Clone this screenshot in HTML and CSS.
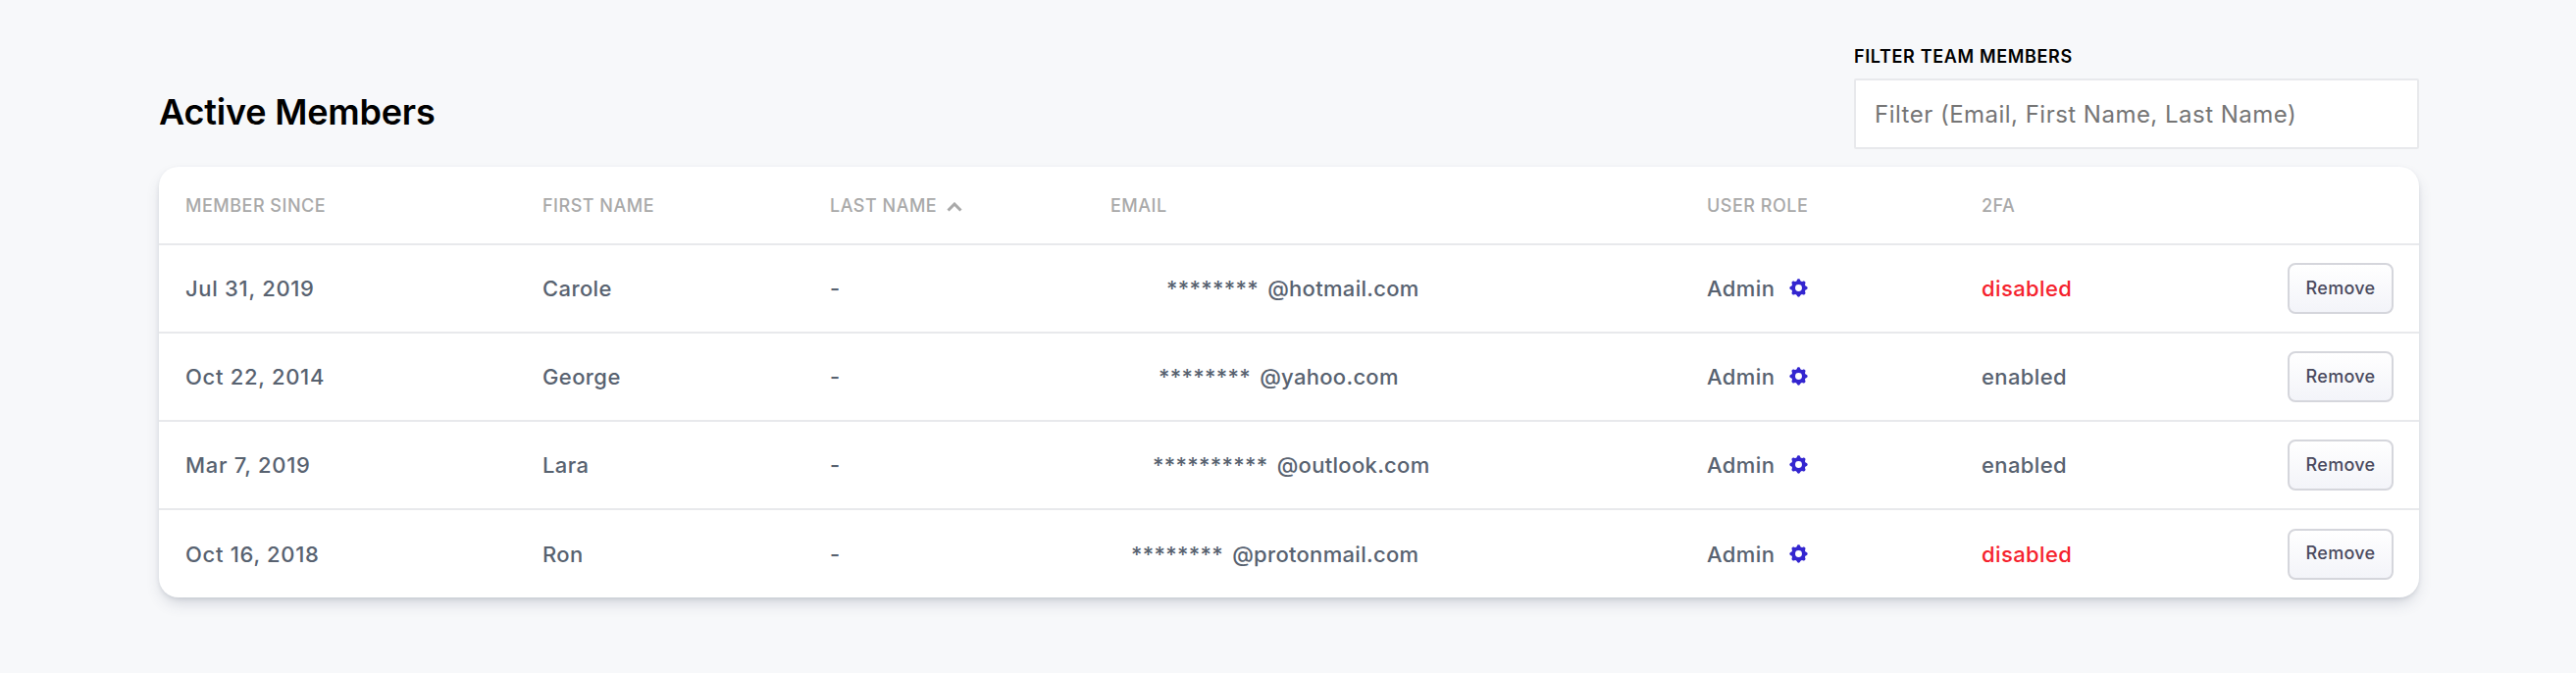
FILE: index.html
```html
<!DOCTYPE html>
<html lang="en">
<head>
    <meta charset="UTF-8">
    <meta name="viewport" content="width=device-width, initial-scale=1.0">
    <title>Active Members</title>
    <link rel="stylesheet" href="styles.css">
</head>
<body>
    <main class="page">
        <div class="top-bar">
            <h2>Active Members</h2>
            <div class="filter">
                <label for="filter">FILTER TEAM MEMBERS</label>
                <input id="filter" type="text" placeholder="Filter (Email, First Name, Last Name)">
            </div>
        </div>
        <div class="card">
            <table>
                <colgroup>
                    <col class="col-since">
                    <col class="col-first">
                    <col class="col-last">
                    <col class="col-email">
                    <col class="col-role">
                    <col class="col-2fa">
                    <col>
                </colgroup>
                <thead>
                    <tr>
                        <th>MEMBER SINCE</th>
                        <th>FIRST NAME</th>
                        <th>LAST NAME
                            <svg class="chevron" viewBox="0 0 16 10" width="16" height="10"><path d="M1.5 8.5 8 2l6.500 6.500"/></svg>
                        </th>
                        <th>EMAIL</th>
                        <th>USER ROLE</th>
                        <th>2FA</th>
                        <th></th>
                    </tr>
                </thead>
                <tbody>
                    <tr>
                        <td class="date">Jul 31, 2019</td>
                        <td>Carole</td>
                        <td>-</td>
                        <td><span class="mail mail-hotmail">******** @hotmail.com</span></td>
                        <td>Admin <svg class="gear" viewBox="0 0 20 20" width="23" height="23"><path fill-rule="evenodd" d="M11.49 3.17c-.38-1.56-2.6-1.56-2.98 0a1.532 1.532 0 01-2.286.948c-1.372-.836-2.942.734-2.106 2.106.54.886.061 2.042-.947 2.287-1.561.379-1.561 2.6 0 2.978a1.532 1.532 0 01.947 2.287c-.836 1.372.734 2.942 2.106 2.106a1.532 1.532 0 012.287.947c.379 1.561 2.6 1.561 2.978 0a1.533 1.533 0 012.287-.947c1.372.836 2.942-.734 2.106-2.106a1.533 1.533 0 01.947-2.287c1.561-.379 1.561-2.6 0-2.978a1.532 1.532 0 01-.947-2.287c.836-1.372-.734-2.942-2.106-2.106a1.532 1.532 0 01-2.287-.947zM10 13a3 3 0 100-6 3 3 0 000 6z"/></svg></td>
                        <td class="off">disabled</td>
                        <td class="action"><button>Remove</button></td>
                    </tr>
                    <tr>
                        <td class="date">Oct 22, 2014</td>
                        <td>George</td>
                        <td>-</td>
                        <td><span class="mail mail-yahoo">******** @yahoo.com</span></td>
                        <td>Admin <svg class="gear" viewBox="0 0 20 20" width="23" height="23"><path fill-rule="evenodd" d="M11.49 3.17c-.38-1.56-2.6-1.56-2.98 0a1.532 1.532 0 01-2.286.948c-1.372-.836-2.942.734-2.106 2.106.54.886.061 2.042-.947 2.287-1.561.379-1.561 2.6 0 2.978a1.532 1.532 0 01.947 2.287c-.836 1.372.734 2.942 2.106 2.106a1.532 1.532 0 012.287.947c.379 1.561 2.6 1.561 2.978 0a1.533 1.533 0 012.287-.947c1.372.836 2.942-.734 2.106-2.106a1.533 1.533 0 01.947-2.287c1.561-.379 1.561-2.6 0-2.978a1.532 1.532 0 01-.947-2.287c.836-1.372-.734-2.942-2.106-2.106a1.532 1.532 0 01-2.287-.947zM10 13a3 3 0 100-6 3 3 0 000 6z"/></svg></td>
                        <td>enabled</td>
                        <td class="action"><button>Remove</button></td>
                    </tr>
                    <tr>
                        <td class="date">Mar 7, 2019</td>
                        <td>Lara</td>
                        <td>-</td>
                        <td><span class="mail mail-outlook">********** @outlook.com</span></td>
                        <td>Admin <svg class="gear" viewBox="0 0 20 20" width="23" height="23"><path fill-rule="evenodd" d="M11.49 3.17c-.38-1.56-2.6-1.56-2.98 0a1.532 1.532 0 01-2.286.948c-1.372-.836-2.942.734-2.106 2.106.54.886.061 2.042-.947 2.287-1.561.379-1.561 2.6 0 2.978a1.532 1.532 0 01.947 2.287c-.836 1.372.734 2.942 2.106 2.106a1.532 1.532 0 012.287.947c.379 1.561 2.6 1.561 2.978 0a1.533 1.533 0 012.287-.947c1.372.836 2.942-.734 2.106-2.106a1.533 1.533 0 01.947-2.287c1.561-.379 1.561-2.6 0-2.978a1.532 1.532 0 01-.947-2.287c.836-1.372-.734-2.942-2.106-2.106a1.532 1.532 0 01-2.287-.947zM10 13a3 3 0 100-6 3 3 0 000 6z"/></svg></td>
                        <td>enabled</td>
                        <td class="action"><button>Remove</button></td>
                    </tr>
                    <tr>
                        <td class="date">Oct 16, 2018</td>
                        <td>Ron</td>
                        <td>-</td>
                        <td><span class="mail mail-proton">******** @protonmail.com</span></td>
                        <td>Admin <svg class="gear" viewBox="0 0 20 20" width="23" height="23"><path fill-rule="evenodd" d="M11.49 3.17c-.38-1.56-2.6-1.56-2.98 0a1.532 1.532 0 01-2.286.948c-1.372-.836-2.942.734-2.106 2.106.54.886.061 2.042-.947 2.287-1.561.379-1.561 2.6 0 2.978a1.532 1.532 0 01.947 2.287c-.836 1.372.734 2.942 2.106 2.106a1.532 1.532 0 012.287.947c.379 1.561 2.6 1.561 2.978 0a1.533 1.533 0 012.287-.947c1.372.836 2.942-.734 2.106-2.106a1.533 1.533 0 01.947-2.287c1.561-.379 1.561-2.6 0-2.978a1.532 1.532 0 01-.947-2.287c.836-1.372-.734-2.942-2.106-2.106a1.532 1.532 0 01-2.287-.947zM10 13a3 3 0 100-6 3 3 0 000 6z"/></svg></td>
                        <td class="off">disabled</td>
                        <td class="action"><button>Remove</button></td>
                    </tr>
                </tbody>
            </table>
        </div>
    </main>
</body>
</html>
```

FILE: styles.css
```css
* {
    box-sizing: border-box;
    padding: 0;
    margin: 0;
}
body {
    font-family: Inter, sans-serif;
    background: #f7f8fa;
}
.page {
    min-height: 100vh;
    padding: 45px 160px 0 162px;
}
.top-bar {
    display: flex;
    justify-content: space-between;
    align-items: flex-end;
    margin-bottom: 18px;
}
.top-bar h2 {
    font-size: 36px;
    line-height: 44px;
    font-weight: 600;
    letter-spacing: -0.2px;
    color: #000;
    padding-bottom: 16px;
}
.filter {
    width: 576px;
}
.filter label {
    display: block;
    font-size: 18px;
    line-height: 26px;
    font-weight: 600;
    letter-spacing: 0.65px;
    color: #000;
    margin-bottom: 9px;
}
.filter input {
    display: block;
    width: 100%;
    height: 72px;
    padding: 0 19px;
    font-size: 24px;
    letter-spacing: 0.48px;
    font-family: Inter, sans-serif;
    background: #fff;
    border: 2px solid #e8e9ec;
    border-radius: 2px;
    outline: none;
}
.filter input::placeholder {
    color: #757575;
    opacity: 1;
}
.card {
    background: #fff;
    border-radius: 20px;
    box-shadow: 0 8px 16px -3px rgba(60, 72, 95, 0.2), 0 2px 5px -1px rgba(60, 72, 95, 0.16);
    overflow: hidden;
}
table {
    width: 100%;
    border-collapse: collapse;
    table-layout: fixed;
}
.col-since { width: 364px; }
.col-first { width: 293px; }
.col-last { width: 286px; }
.col-email { width: 608px; }
.col-role { width: 280px; }
.col-2fa { width: 300px; }
th {
    height: 79px;
    padding-left: 27px;
    text-align: left;
    font-size: 18px;
    font-weight: 500;
    letter-spacing: 0.5px;
    color: #a9a9a9;
    border-bottom: 2px solid #e8e9ec;
}
td {
    height: 90px;
    padding-left: 27px;
    font-size: 22px;
    font-weight: 500;
    letter-spacing: 0.4px;
    color: #586270;
    border-bottom: 2px solid #e8e9ec;
    white-space: nowrap;
}
tbody tr:last-child td {
    border-bottom: none;
}
td.date {
    letter-spacing: 0.7px;
}
.chevron {
    margin-left: 4px;
    fill: none;
    stroke: #a9a9a9;
    stroke-width: 3;
}
.gear {
    margin-left: 6px;
    fill: #3426d0;
    vertical-align: -3px;
}
td.off {
    color: #f5222d;
}
td.action {
    padding: 0 26px 0 0;
    text-align: right;
}
button {
    width: 108px;
    height: 52px;
    padding-bottom: 2px;
    font-family: Inter, sans-serif;
    font-size: 18px;
    font-weight: 500;
    letter-spacing: 0.3px;
    color: #4a4a5e;
    background: linear-gradient(#fff, #f3f4f9);
    border: 2px solid #d5d6dc;
    border-radius: 8px;
    cursor: pointer;
}
.mail {
    display: inline-block;
    letter-spacing: 0.3px;
    word-spacing: 3px;
}
.mail-hotmail { margin-left: 57px; }
.mail-yahoo { margin-left: 49px; }
.mail-outlook { margin-left: 43px; }
.mail-proton { margin-left: 21px; }
```
